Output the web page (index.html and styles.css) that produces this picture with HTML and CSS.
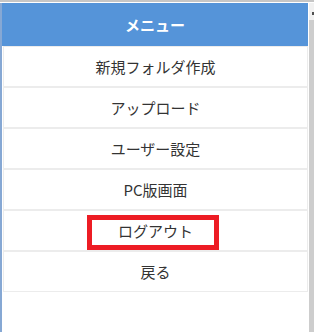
FILE: index.html
```html
<!DOCTYPE html>
<html lang="ja">
<head>
<meta charset="utf-8">
<link rel="stylesheet" href="styles.css">
</head>
<body>
<div class="frame">
  <div class="topline"></div>
  <div class="body">
    <div class="lside"></div>
    <div class="main">
      <div class="header">メニュー</div>
      <ul class="list">
        <li class="item">新規フォルダ作成</li>
        <li class="item">アップロード</li>
        <li class="item">ユーザー設定</li>
        <li class="item">PC版画面</li>
        <li class="item">ログアウト</li>
        <li class="item">戻る</li>
      </ul>
    </div>
    <div class="scroll">
      <div class="scroll-top"><span class="arrow"></span></div>
      <div class="scroll-thumb"></div>
    </div>
  </div>
  <div class="highlight"></div>
</div>
</body>
</html>
```
FILE: styles.css
```css
html, body {
  margin: 0;
  padding: 0;
  background: #ffffff;
}
.frame {
  position: relative;
  width: 314px;
  height: 332px;
  display: flex;
  flex-direction: column;
  font-family: "Noto Sans CJK JP", "Noto Sans", sans-serif;
  overflow: hidden;
}
.topline {
  height: 2px;
  background: #c6c6c6;
  border-bottom: 1px solid #ffffff;
  flex: none;
}
.body {
  flex: 1;
  display: flex;
}
.lside {
  width: 2px;
  background: #86a8d4;
  flex: none;
}
.main {
  width: 306px;
  flex: none;
}
.header {
  height: 43px;
  background: #5594d9;
  color: #ffffff;
  font-weight: bold;
  font-size: 15px;
  display: flex;
  align-items: center;
  justify-content: center;
}
.list {
  list-style: none;
  margin: 0;
  padding: 0 0 0 1px;
}
.item {
  height: 39px;
  border: 1px solid #ececec;
  color: #333333;
  font-size: 15px;
  display: flex;
  align-items: center;
  justify-content: center;
}
.scroll {
  width: 6px;
  flex: none;
  display: flex;
  flex-direction: column;
  border-left: 1px solid #ffffff;
  box-sizing: border-box;
}
.scroll-top {
  height: 17px;
  background: #f1f1f1;
  position: relative;
}
.arrow {
  position: absolute;
  right: 0;
  top: 9px;
  width: 2px;
  height: 3px;
  background: #505050;
}
.scroll-thumb {
  flex: 1;
  background: #cdcdcd;
}
.highlight {
  position: absolute;
  left: 87px;
  top: 215px;
  width: 122px;
  height: 25px;
  border: 5px solid #ed1c24;
}
```
